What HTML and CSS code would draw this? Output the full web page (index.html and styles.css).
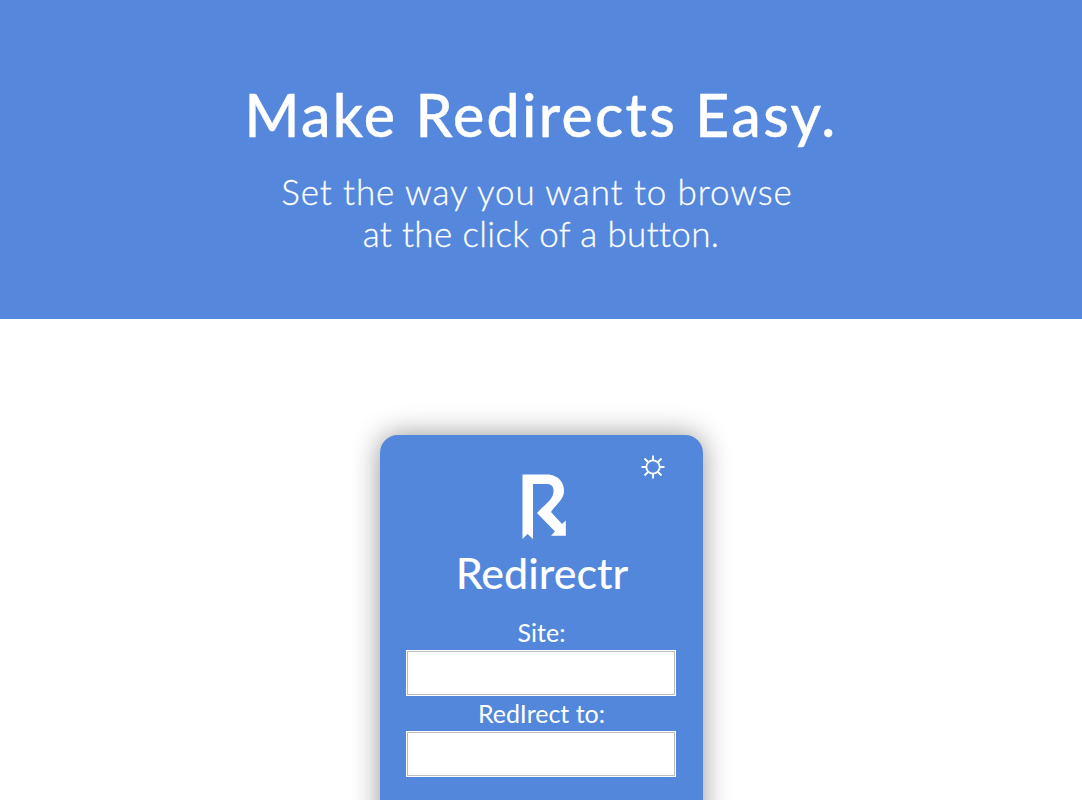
FILE: index.html
```html
<!DOCTYPE html>
<html lang="en">
<head>
<meta charset="utf-8">
<title>Redirectr</title>
<link rel="stylesheet" href="styles.css">
</head>
<body>
<header class="hero">
  <h1 class="hero-title">Make Redirects Easy.</h1>
  <p class="hero-text"><span class="hero-line">Set the way you want to browse</span><span class="hero-line hero-line-end">at the click of a button.</span></p>
</header>
<main class="preview">
  <section class="card">
    <div class="toolbar">
      <svg class="sun" viewBox="0 0 24 24" width="24" height="24"><circle cx="12" cy="12" r="6.700"/><path d="M12 0.500V5M12 19v4.500M.5 12H5M19 12h4.500M3.500 3.500l3.500 3.500M17 17l3.500 3.500M3.500 20.500l3.500-3.500M17 7l3.500-3.500"/></svg>
    </div>
    <svg class="logo" viewBox="0 0 46 66" width="46" height="66"><path d="M.5.5H27C37 1.500 42 9 42 17C42 26 33 31 29 38L40 50L43.800 46.500V61.700H29L33 57.500L15 39C21 32 31 26 31.500 18C32 11 28 10 24 10H11V65L5.500 60L.5 65Z"/></svg>
    <h2 class="brand">Redirectr</h2>
    <form class="form">
      <label class="label" for="site">Site:</label>
      <input class="field" id="site" type="text">
      <label class="label" for="to">RedIrect to:</label>
      <input class="field" id="to" type="text">
    </form>
  </section>
</main>
</body>
</html>
```
FILE: styles.css
```css
html, body {
  height: 100%;
}
body {
  display: flex;
  flex-direction: column;
  margin: 0;
  overflow: hidden;
  background: #fff;
  color: #fff;
  font-family: Lato, "Open Sans", sans-serif;
}
.hero {
  flex: none;
  box-sizing: border-box;
  height: 319px;
  padding-top: 79px;
  background: #5587dc;
  text-align: center;
}
.hero-title {
  margin: 0;
  font-size: 59px;
  font-weight: 500;
  line-height: 72px;
  letter-spacing: 2.3px;
  word-spacing: 1px;
  -webkit-text-stroke: .4px #fff;
}
.hero-text {
  margin: 19px 0 0;
  font-size: 35px;
  font-weight: 300;
  line-height: 42px;
  -webkit-text-stroke: .3px #fff;
}
.hero-line {
  display: block;
  padding-right: 8px;
  letter-spacing: .9px;
}
.hero-line-end {
  padding-right: 0;
  letter-spacing: .35px;
}
.preview {
  display: flex;
  flex: 1;
  min-height: 0;
  box-sizing: border-box;
  justify-content: center;
  padding-top: 116px;
  overflow: hidden;
}
.card {
  box-sizing: border-box;
  display: flex;
  flex-direction: column;
  align-items: center;
  width: 323px;
  margin-bottom: -60px;
  padding: 20px 26px 0;
  border-radius: 18px;
  background: #5287db;
  box-shadow: 0 0 28px rgba(0, 0, 0, .42);
}
.toolbar {
  display: flex;
  justify-content: flex-end;
  align-self: stretch;
  height: 19px;
  padding-right: 12px;
}
.sun {
  flex: none;
  fill: none;
  stroke: #fff;
  stroke-width: 1.8;
}
.logo {
  flex: none;
  margin-left: 7px;
  fill: #fff;
}
.brand {
  margin: 5px 0 0;
  padding-left: 2px;
  font-size: 43px;
  font-weight: 500;
  line-height: 56px;
}
.form {
  display: flex;
  flex-direction: column;
  width: 270px;
  margin-top: 14px;
  text-align: center;
}
.label {
  height: 35px;
  padding-left: 1px;
  font-size: 25px;
  line-height: 34px;
}
.field {
  box-sizing: border-box;
  height: 46px;
  margin: 0;
  padding: 0 8px;
  border: 1px solid #fff;
  border-radius: 0;
  outline: 1px solid #bcbcbc;
  outline-offset: -2px;
  background: #fff;
  font: 22px Lato, sans-serif;
}
```
